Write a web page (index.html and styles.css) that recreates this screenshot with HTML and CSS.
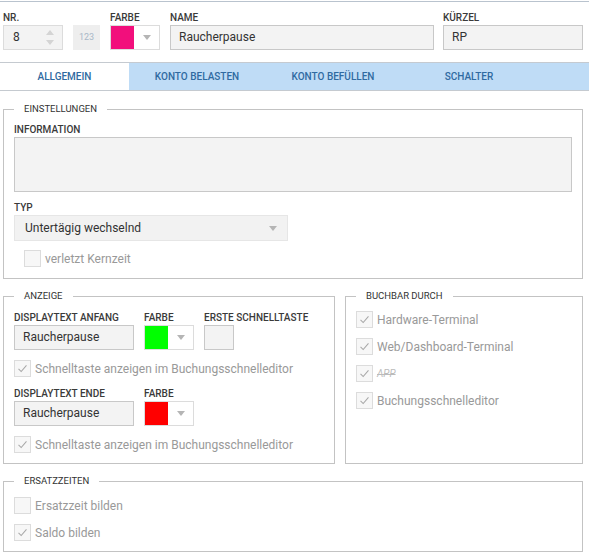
FILE: index.html
```html
<!DOCTYPE html>
<html lang="de">

<head>
    <meta charset="UTF-8">
    <title>Buchungsart</title>
    <link rel="stylesheet" href="styles.css">
</head>

<body>

    <section class="kopf">
        <div class="feld">
            <label>NR.</label>
            <div class="eingabe zahl">
                <span>8</span>
                <span class="spinner"><i class="hoch"></i><i class="runter"></i></span>
            </div>
        </div>
        <div class="nummern">123</div>
        <div class="feld">
            <label>FARBE</label>
            <div class="farbwahl">
                <span class="swatch pink"></span>
                <span class="pfeil"></span>
            </div>
        </div>
        <div class="feld name">
            <label>NAME</label>
            <div class="eingabe">Raucherpause</div>
        </div>
        <div class="feld kuerzel">
            <label>KÜRZEL</label>
            <div class="eingabe">RP</div>
        </div>
    </section>

    <nav class="reiter">
        <button class="valgt">ALLGEMEIN</button>
        <button>KONTO BELASTEN</button>
        <button>KONTO BEFÜLLEN</button>
        <button>SCHALTER</button>
    </nav>

    <main class="inhalt">
        <fieldset class="gruppe einstellungen">
            <legend>EINSTELLUNGEN</legend>
            <label>INFORMATION</label>
            <div class="textfeld"></div>
            <label class="abstand">TYP</label>
            <div class="auswahl">Untertägig wechselnd<span class="pfeil"></span></div>
            <div class="haken eingerueckt">
                <span class="box"></span>
                <span>verletzt Kernzeit</span>
            </div>
        </fieldset>

        <div class="spalten">
            <fieldset class="gruppe anzeige">
                <legend>ANZEIGE</legend>
                <div class="zeile">
                    <div class="feld">
                        <label>DISPLAYTEXT ANFANG</label>
                        <div class="eingabe display">Raucherpause</div>
                    </div>
                    <div class="feld">
                        <label>FARBE</label>
                        <div class="farbwahl"><span class="swatch gruen"></span><span class="pfeil"></span></div>
                    </div>
                    <div class="feld">
                        <label>ERSTE SCHNELLTASTE</label>
                        <div class="eingabe taste"></div>
                    </div>
                </div>
                <div class="haken">
                    <span class="box"><svg viewBox="0 0 17 17"><polyline points="4,9 7,12 13,5"/></svg></span>
                    <span>Schnelltaste anzeigen im Buchungsschnelleditor</span>
                </div>
                <div class="zeile">
                    <div class="feld">
                        <label>DISPLAYTEXT ENDE</label>
                        <div class="eingabe display">Raucherpause</div>
                    </div>
                    <div class="feld">
                        <label>FARBE</label>
                        <div class="farbwahl"><span class="swatch rot"></span><span class="pfeil"></span></div>
                    </div>
                </div>
                <div class="haken">
                    <span class="box"><svg viewBox="0 0 17 17"><polyline points="4,9 7,12 13,5"/></svg></span>
                    <span>Schnelltaste anzeigen im Buchungsschnelleditor</span>
                </div>
            </fieldset>

            <fieldset class="gruppe buchbar">
                <legend>BUCHBAR DURCH</legend>
                <div class="haken">
                    <span class="box"><svg viewBox="0 0 17 17"><polyline points="4,9 7,12 13,5"/></svg></span>
                    <span>Hardware-Terminal</span>
                </div>
                <div class="haken">
                    <span class="box"><svg viewBox="0 0 17 17"><polyline points="4,9 7,12 13,5"/></svg></span>
                    <span>Web/Dashboard-Terminal</span>
                </div>
                <div class="haken">
                    <span class="box"><svg viewBox="0 0 17 17"><polyline points="4,9 7,12 13,5"/></svg></span>
                    <span class="gestrichen">APP</span>
                </div>
                <div class="haken">
                    <span class="box"><svg viewBox="0 0 17 17"><polyline points="4,9 7,12 13,5"/></svg></span>
                    <span>Buchungsschnelleditor</span>
                </div>
            </fieldset>
        </div>

        <fieldset class="gruppe ersatz">
            <legend>ERSATZZEITEN</legend>
            <div class="haken">
                <span class="box"></span>
                <span>Ersatzzeit bilden</span>
            </div>
            <div class="haken">
                <span class="box"><svg viewBox="0 0 17 17"><polyline points="4,9 7,12 13,5"/></svg></span>
                <span>Saldo bilden</span>
            </div>
        </fieldset>
    </main>

</body>

</html>
```

FILE: styles.css
```css
body {
    margin: 0;
    background-color: #fff;
    font-family: Roboto, "Liberation Sans", sans-serif;
    color: #333;
    border-top: 1px solid #b9c3ce;
    margin-top: 1px;
}

label {
    display: block;
    font-size: 10px;
    font-weight: 500;
    line-height: 11px;
    color: #3a3a3a;
    margin-bottom: 2px;
}

/* kopf */

.kopf {
    display: flex;
    align-items: flex-end;
    padding: 10px 6px 0 3px;
}

.feld {
    display: flex;
    flex-direction: column;
}

.eingabe {
    box-sizing: border-box;
    height: 25px;
    background-color: #f3f3f3;
    border: 1px solid #c8c8c8;
    font-size: 12px;
    line-height: 23px;
    padding: 0 8px;
    color: #333;
}

.zahl {
    width: 60px;
    display: flex;
    justify-content: space-between;
    border-color: #dcdcdc;
    padding: 0 0 0 9px;
}

.spinner {
    width: 24px;
    display: flex;
    flex-direction: column;
    align-items: center;
    justify-content: center;
    gap: 5px;
}

.spinner i {
    width: 0;
    height: 0;
    border-left: 4px solid transparent;
    border-right: 4px solid transparent;
}

.hoch {
    border-bottom: 5px solid #d4d4d4;
}

.runter {
    border-top: 5px solid #d4d4d4;
}

.nummern {
    width: 27px;
    height: 25px;
    margin-left: 10px;
    background-color: #eee;
    color: #a9b8c8;
    font-size: 9px;
    line-height: 25px;
    text-align: center;
}

.kopf .feld:nth-child(3) {
    margin-left: 10px;
}

.farbwahl {
    box-sizing: border-box;
    width: 50px;
    height: 25px;
    border: 1px solid #dcdcdc;
    display: flex;
    background-color: #fff;
}

.swatch {
    width: 23px;
    height: 100%;
}

.pink {
    background-color: #f20f7c;
}

.gruen {
    background-color: #00ff00;
}

.rot {
    background-color: #ff0000;
}

.pfeil {
    flex: 1;
    display: flex;
    align-items: center;
    justify-content: center;
}

.pfeil::after {
    content: "";
    border-left: 4px solid transparent;
    border-right: 4px solid transparent;
    border-top: 5px solid #b5b5b5;
}

.name {
    margin-left: 10px;
}

.name .eingabe {
    width: 264px;
}

.kuerzel {
    margin-left: 9px;
}

.kuerzel .eingabe {
    width: 140px;
}

/* reiter */

.reiter {
    display: flex;
    margin-top: 12px;
    border-top: 1px solid #c5cad0;
    border-bottom: 1px solid #c5cad0;
    background-color: #bfdcf6;
}

.reiter button {
    width: 136px;
    height: 27px;
    border: none;
    background: none;
    font-family: Roboto, "Liberation Sans", sans-serif;
    font-size: 10px;
    font-weight: 500;
    color: #2f6aa1;
    cursor: pointer;
    padding: 0;
}

.reiter .valgt {
    width: 129px;
    background-color: #fff;
}

/* inhalt */

.inhalt {
    padding: 12px 6px 8px 3px;
}

.gruppe {
    margin: 0;
    padding: 9px 10px 10px;
    border: 1px solid #c3c3c3;
    min-width: 0;
}

.gruppe legend {
    padding: 0 10px;
    font-size: 9.5px;
    line-height: 12px;
    color: #333;
}

.textfeld {
    box-sizing: border-box;
    height: 55px;
    background-color: #f3f3f3;
    border: 1px solid #c8c8c8;
}

.abstand {
    margin-top: 10px;
}

.auswahl {
    box-sizing: border-box;
    width: 274px;
    height: 26px;
    padding: 0 10px;
    display: flex;
    align-items: center;
    justify-content: space-between;
    background-color: #f2f2f2;
    border: 1px solid #e6e6e6;
    font-size: 12px;
    color: #333;
}

.auswahl .pfeil {
    flex: none;
}

.haken {
    display: flex;
    align-items: center;
    gap: 4px;
    height: 17px;
    margin-top: 10px;
    font-size: 12px;
    color: #999;
}

.eingerueckt {
    margin-left: 10px;
    margin-top: 9px;
}

.einstellungen {
    padding-bottom: 11px;
}

.box {
    box-sizing: border-box;
    width: 17px;
    height: 17px;
    border: 1px solid #dcdcdc;
    background-color: #f7f7f7;
}

.box svg {
    display: block;
    width: 15px;
    height: 15px;
}

.box polyline {
    fill: none;
    stroke: #a8a8a8;
    stroke-width: 1.2;
}

.gestrichen {
    text-decoration: line-through;
    font-style: italic;
    font-size: 10px;
    color: #bbb;
}

.spalten {
    display: flex;
    gap: 10px;
    margin-top: 11px;
}

.anzeige {
    width: 332px;
    box-sizing: border-box;
    padding-top: 10px;
}

.buchbar {
    flex: 1;
    padding-top: 0;
}

.buchbar .haken:first-of-type {
    margin-top: 9px;
}

.zeile {
    display: flex;
    gap: 10px;
}

.zeile + .haken {
    margin-top: 10px;
}

.haken + .zeile {
    margin-top: 11px;
}

.display {
    width: 120px;
}

.taste {
    width: 30px;
}

.ersatz {
    margin-top: 11px;
    padding-top: 0;
}

.ersatz .haken:first-of-type {
    margin-top: 10px;
}
```
